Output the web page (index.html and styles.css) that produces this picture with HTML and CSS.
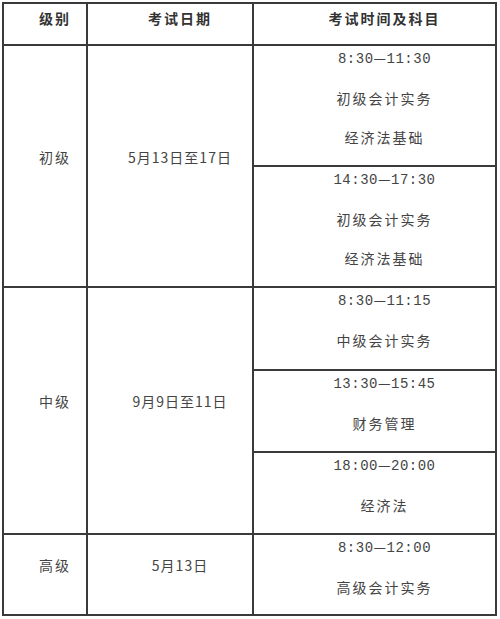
FILE: index.html
```html
<!DOCTYPE html>
<html lang="zh">
<head>
<meta charset="utf-8">
<title>考试时间安排</title>
<link rel="stylesheet" href="styles.css">
</head>
<body>
<div class="wrap">
<table class="sched">
  <colgroup>
    <col class="c1"><col class="c2"><col class="c3">
  </colgroup>
  <thead>
    <tr class="h-head">
      <th>级别</th>
      <th>考试日期</th>
      <th>考试时间及科目</th>
    </tr>
  </thead>
  <tbody>
    <tr class="h-big">
      <td class="lvl" rowspan="2">初级</td>
      <td class="date" rowspan="2">5月13日至17日</td>
      <td class="sess"><p class="time">8:30<span class="dash">—</span>11:30</p><p>初级会计实务</p><p>经济法基础</p></td>
    </tr>
    <tr class="h-big">
      <td class="sess"><p class="time">14:30<span class="dash">—</span>17:30</p><p>初级会计实务</p><p>经济法基础</p></td>
    </tr>
    <tr class="h-mid">
      <td class="lvl" rowspan="3">中级</td>
      <td class="date" rowspan="3">9月9日至11日</td>
      <td class="sess"><p class="time">8:30<span class="dash">—</span>11:15</p><p>中级会计实务</p></td>
    </tr>
    <tr class="h-small">
      <td class="sess"><p class="time">13:30<span class="dash">—</span>15:45</p><p>财务管理</p></td>
    </tr>
    <tr class="h-small">
      <td class="sess"><p class="time">18:00<span class="dash">—</span>20:00</p><p>经济法</p></td>
    </tr>
    <tr class="h-last">
      <td class="lvl">高级</td>
      <td class="date">5月13日</td>
      <td class="sess"><p class="time">8:30<span class="dash">—</span>12:00</p><p>高级会计实务</p></td>
    </tr>
  </tbody>
</table>
</div>
</body>
</html>
```
FILE: styles.css
```css
html, body {
  margin: 0;
  padding: 0;
  background: #ffffff;
}
.wrap {
  padding: 2px 0 0 2px;
}
.sched {
  border-collapse: collapse;
  table-layout: fixed;
  width: 495px;
  font-family: "Noto Sans CJK SC", "Noto Sans", sans-serif;
  font-size: 14px;
  color: #444444;
}
.c1 { width: 84px; }
.c2 { width: 166px; }
.c3 { width: 243px; }
.sched th,
.sched td {
  border: 2px solid #3a3a3a;
  padding: 0 0 0 20px;
  text-align: center;
  line-height: 27px;
}
.sched th {
  font-weight: bold;
  color: #333333;
  vertical-align: top;
  padding-top: 1px;
  letter-spacing: 2px;
}
.h-head { height: 42px; }
.h-big { height: 121px; }
.h-mid { height: 83px; }
.h-small { height: 82px; }
.h-last { height: 81px; }
.sched .lvl {
  vertical-align: middle;
  letter-spacing: 2px;
  padding-bottom: 18px;
}
.sched .date {
  vertical-align: middle;
  letter-spacing: 1px;
  padding-bottom: 18px;
}
.sched .sess {
  vertical-align: top;
}
.sess p {
  margin: 0 0 12px;
  letter-spacing: 2px;
}
.sess p:last-child {
  margin-bottom: 0;
}
.sess .time {
  font-family: "Liberation Mono", "DejaVu Sans Mono", monospace;
  letter-spacing: 0.5px;
  height: 27px;
}
.time .dash {
  font-family: "Noto Sans CJK SC", sans-serif;
  letter-spacing: 0.5px;
  line-height: 1;
}
```
